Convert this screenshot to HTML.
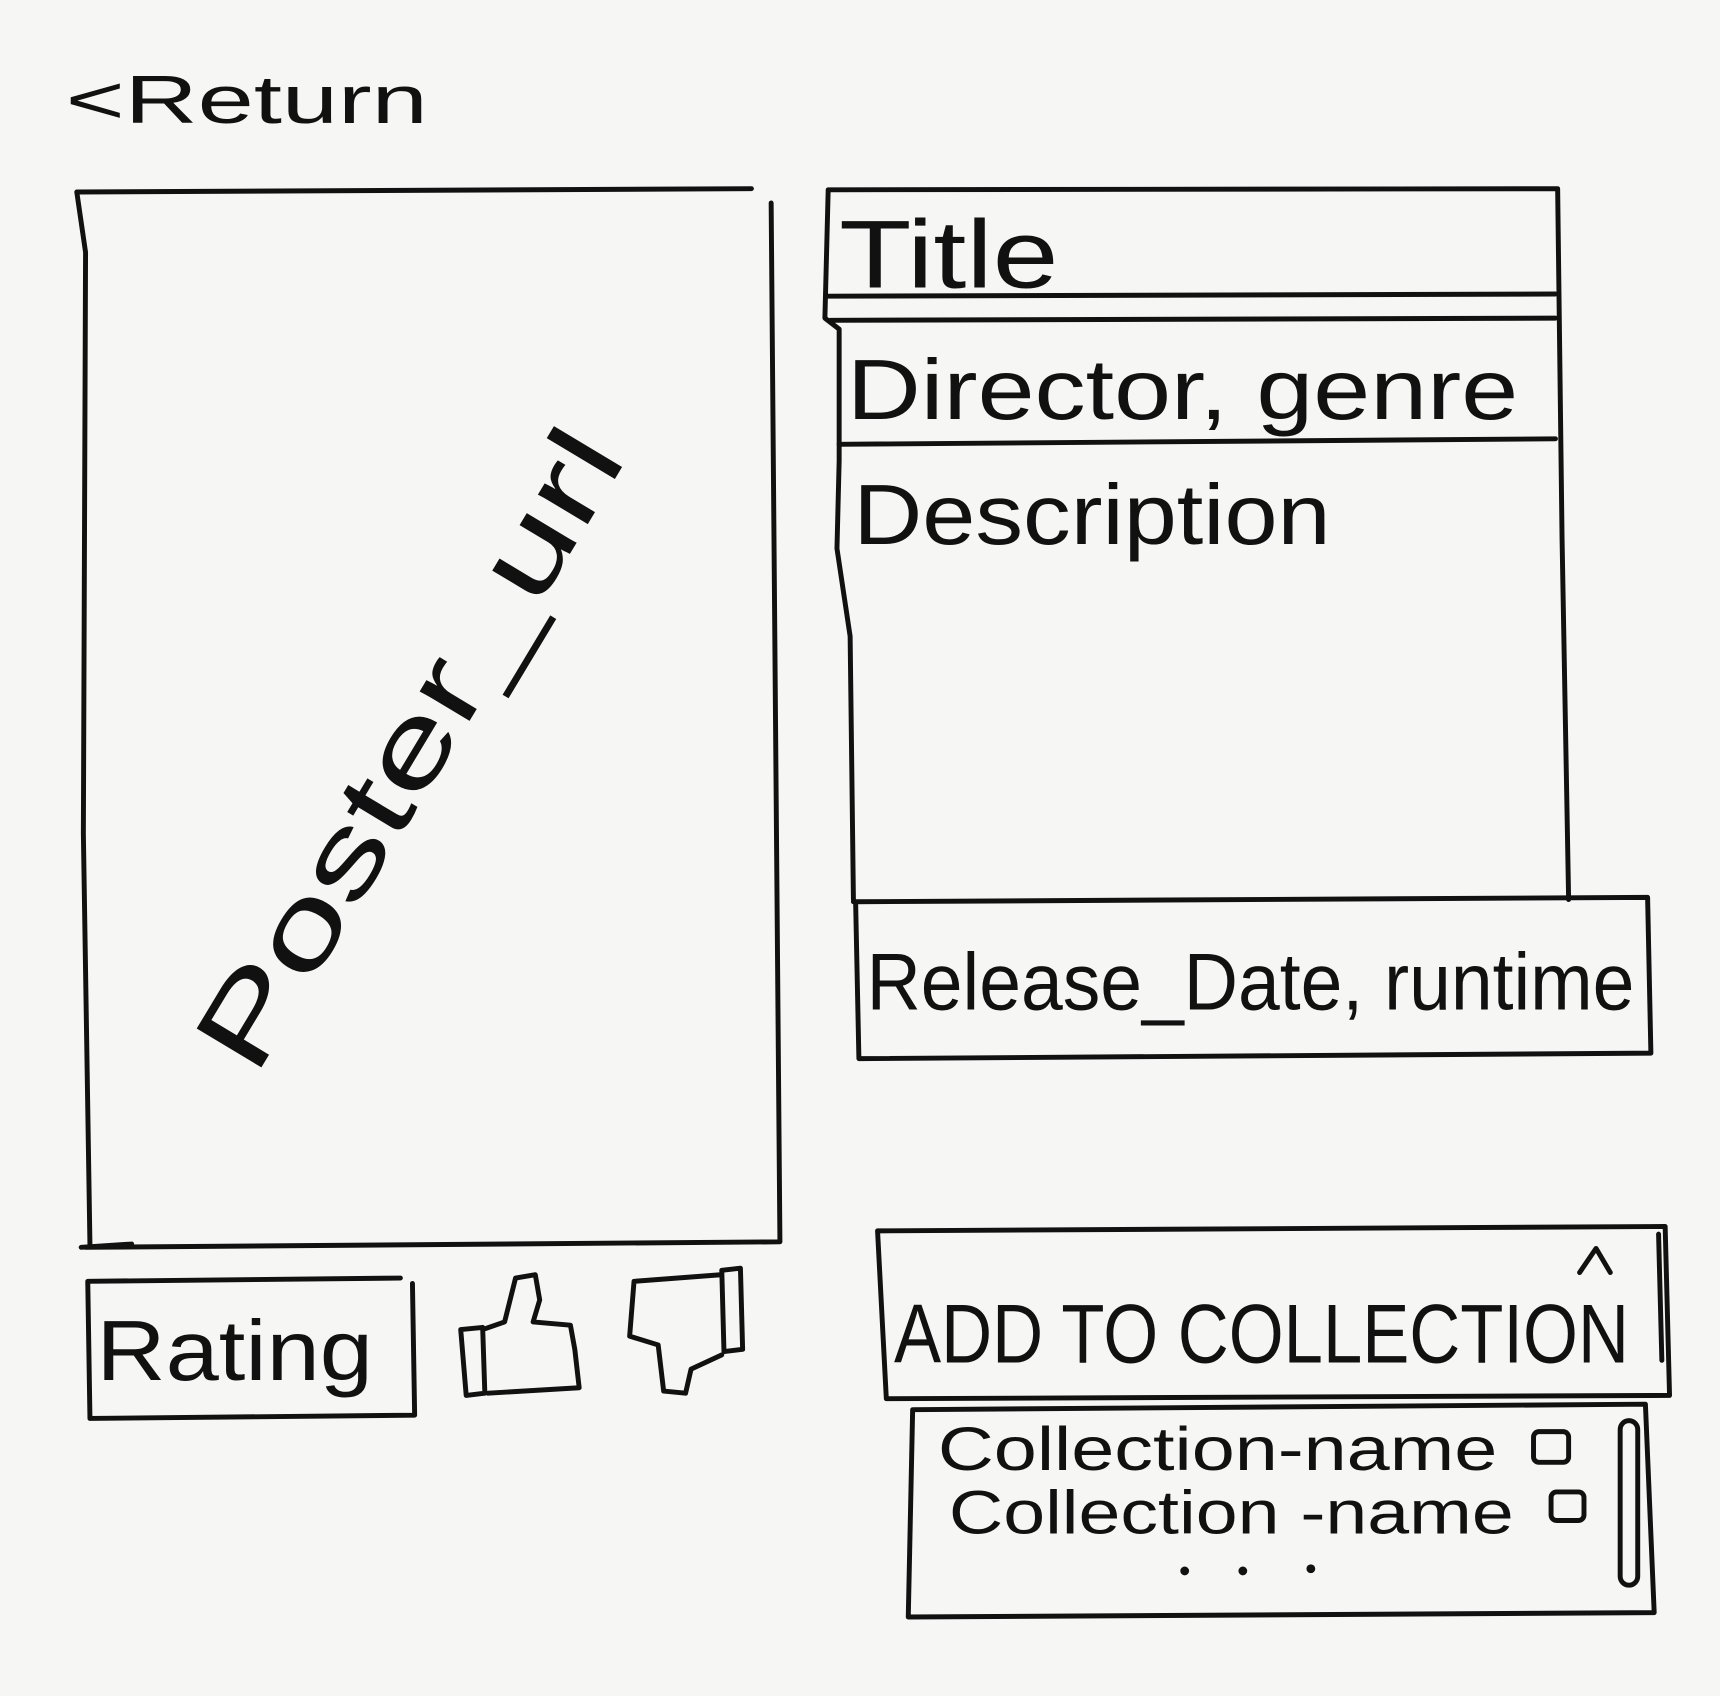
<!DOCTYPE html>
<html><head><meta charset="utf-8"><style>
html,body{margin:0;padding:0;background:#f6f6f4;}
svg{display:block;}
text{font-family:"Liberation Sans",sans-serif;fill:#111;}
</style></head><body>
<svg width="1720" height="1696" viewBox="0 0 1568 1546" preserveAspectRatio="none" xmlns="http://www.w3.org/2000/svg">
<rect width="1568" height="1546" fill="#f6f6f4"/>
<g fill="none" stroke="#111" stroke-width="4.5" stroke-linecap="round" stroke-linejoin="round">
<path d="M70 175 L685 172 M703 185 L711 1132 L78 1137 M70 175 L78 230 L76 760 L82 1135"/>
<path d="M74 1137 L120 1134"/>
<path d="M755 173 L1420 172 L1424 490 L1430 820 M755 173 L752 290 L765 300 L765 420 L763 500 L775 580 L778 820"/>
<path d="M755 270 L1418 268 M757 292 L1418 290 M765 405 L1418 400"/>
<path d="M778 822 L1502 818 L1505 960 L783 965 L780 822"/>
<path d="M80 1168 L365 1165 M376 1170 L378 1290 L82 1293 L80 1168"/>
<path d="M420 1212 L440 1210 L442 1270 L425 1272 Z M440 1212 L460 1205 L470 1165 L488 1162 L492 1185 L486 1205 L520 1208 L524 1230 L528 1265 L445 1270"/>
<path d="M658 1158 L675 1156 L677 1230 L660 1232 Z M657 1162 L578 1168 L574 1218 L600 1226 L605 1268 L625 1270 L630 1248 L658 1235"/>
<path d="M800 1122 L1518 1118 L1522 1272 L808 1275 L800 1122"/>
<path d="M1440 1160 L1455 1138 L1468 1160"/>
<path d="M1512 1125 L1515 1240"/>
<path d="M832 1285 L1500 1280 L1508 1470 L828 1474 L832 1285"/>
<rect x="1398" y="1305" width="32" height="28" rx="5"/>
<rect x="1414" y="1360" width="30" height="26" rx="5"/>
<rect x="1477" y="1295" width="16" height="150" rx="8"/>
</g>
<g fill="#111"><circle cx="1080" cy="1432" r="4"/><circle cx="1133" cy="1432" r="4"/><circle cx="1195" cy="1430" r="4"/></g>
<text x="60" y="112" font-size="62" textLength="330" lengthAdjust="spacingAndGlyphs">&lt;Return</text>
<text x="385" y="710" font-size="100" text-anchor="middle" textLength="660" lengthAdjust="spacingAndGlyphs" transform="rotate(-59 385 690)">Poster_url</text>
<text x="765" y="262" font-size="88" textLength="200" lengthAdjust="spacingAndGlyphs">Title</text>
<text x="772" y="382" font-size="78" textLength="612" lengthAdjust="spacingAndGlyphs">Director, genre</text>
<text x="778" y="496" font-size="78" textLength="435" lengthAdjust="spacingAndGlyphs">Description</text>
<text x="790" y="920" font-size="74" textLength="700" lengthAdjust="spacingAndGlyphs">Release_Date, runtime</text>
<text x="88" y="1258" font-size="78" textLength="252" lengthAdjust="spacingAndGlyphs">Rating</text>
<text x="815" y="1242" font-size="76" textLength="670" lengthAdjust="spacingAndGlyphs">ADD TO COLLECTION</text>
<text x="855" y="1340" font-size="56" textLength="510" lengthAdjust="spacingAndGlyphs">Collection-name</text>
<text x="865" y="1398" font-size="56" textLength="515" lengthAdjust="spacingAndGlyphs">Collection -name</text>
</svg>
</body></html>
